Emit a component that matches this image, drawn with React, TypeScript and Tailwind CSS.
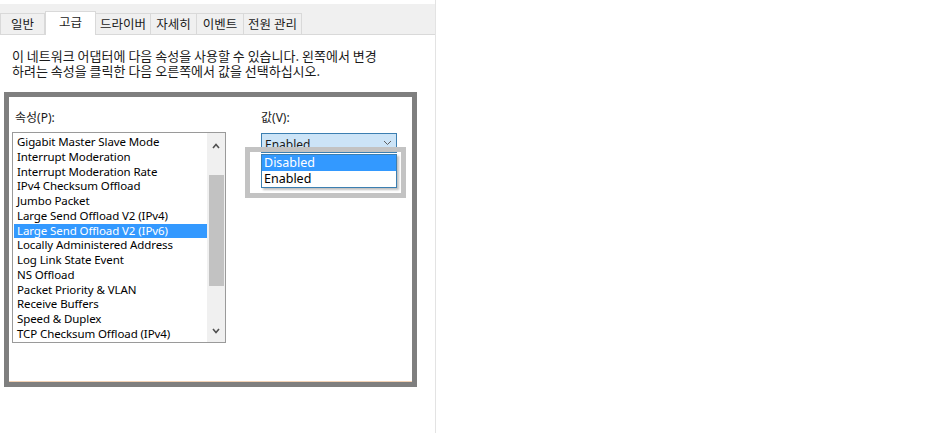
import React from 'react';

const tabs = ['일반', '고급', '드라이버', '자세히', '이벤트', '전원 관리'];
const tabWidths = ['w-[45px]', 'w-[51px]', 'w-[56px]', 'w-[47px]', 'w-[48px]', 'w-[59px]'];

const props = [
  'Gigabit Master Slave Mode',
  'Interrupt Moderation',
  'Interrupt Moderation Rate',
  'IPv4 Checksum Offload',
  'Jumbo Packet',
  'Large Send Offload V2 (IPv4)',
  'Large Send Offload V2 (IPv6)',
  'Locally Administered Address',
  'Log Link State Event',
  'NS Offload',
  'Packet Priority & VLAN',
  'Receive Buffers',
  'Speed & Duplex',
  'TCP Checksum Offload (IPv4)',
];

const font = { fontFamily: '"Noto Sans", "Noto Sans CJK KR", sans-serif' };
const krFont = { fontFamily: '"Noto Sans CJK KR", "Noto Sans", sans-serif' };

function Chevron({ up }: { up?: boolean }) {
  return (
    <svg width="8" height="6" viewBox="0 0 8 6" className="block">
      <path
        d={up ? 'M1 5 L4 1.5 L7 5' : 'M1 1 L4 4.5 L7 1'}
        fill="none"
        stroke="#505050"
        strokeWidth="1.6"
      />
    </svg>
  );
}

export default function App() {
  return (
    <div className="w-[937px] h-[433px] bg-white flex text-[12px] text-[#1a1a1a]" style={font}>
      {/* dialog page */}
      <div className="w-[436px] h-full border-r border-[#e3e3e3] flex flex-col">
        {/* tab strip */}
        <div className="mt-[4px] h-[31px] bg-[#f0f0f0] border-b border-[#d9d9d9] flex items-end text-[12.5px]" style={krFont}>
          {tabs.map((t, i) =>
            i === 1 ? (
              <div
                key={t}
                className={`${tabWidths[i]} h-[24px] -mb-px bg-white border border-b-0 border-[#d9d9d9] flex items-center justify-center leading-none pb-[2px]`}
              >
                {t}
              </div>
            ) : (
              <div
                key={t}
                className={`${tabWidths[i]} h-[21px] bg-[#f0f0f0] border border-b-0 border-[#d9d9d9] -ml-px first:ml-0 flex items-center justify-center leading-none`}
              >
                {t}
              </div>
            )
          )}
        </div>

        {/* description */}
        <div className="pl-[12px] pt-[13px] leading-[15px] text-[13px] whitespace-nowrap" style={krFont}>
          <div className="h-[15px]">이 네트워크 어댑터에 다음 속성을 사용할 수 있습니다. 왼쪽에서 변경</div>
          <div className="h-[15px]">하려는 속성을 클릭한 다음 오른쪽에서 값을 선택하십시오.</div>
        </div>

        {/* annotated frame */}
        <div className="relative ml-[4px] mt-[14px] w-[413px] h-[295px] border-[5px] border-[#7f7f7f] bg-white">
          <div className="flex pl-[3px] pt-[14px]">
            {/* properties */}
            <div className="w-[214px]">
              <div className="h-[21px] pl-[3px] leading-[14px]">속성(P):</div>
              <div className="h-[211px] border border-[#9a9a9a] flex">
                <div className="flex-1 pt-[2px] pl-px text-[11.5px] tracking-[-0.1px]">
                  {props.map((p, i) => (
                    <div
                      key={p}
                      className={`h-[14.75px] leading-[14px] pl-[3px] whitespace-nowrap overflow-hidden ${
                        i === 6 ? 'bg-[#3399ff] text-white' : 'text-black'
                      }`}
                    >
                      {p}
                    </div>
                  ))}
                </div>
                <div className="w-[18px] bg-[#f0f0f0] flex flex-col items-center">
                  <div className="h-[18px] flex items-center justify-center mt-[4px]">
                    <Chevron up />
                  </div>
                  <div className="mt-[20px] w-[15px] h-[111px] bg-[#c2c2c2]" />
                  <div className="flex-1" />
                  <div className="h-[18px] flex items-center justify-center mb-[2px]">
                    <Chevron />
                  </div>
                </div>
              </div>
            </div>

            {/* value */}
            <div className="ml-[35px] w-[136px]">
              <div className="h-[22px] leading-[14px]">값(V):</div>
              <div className="h-[20px] bg-[#cce4f7] border border-[#3c7fb1] flex items-center justify-between pl-[3px] pr-[4px]">
                <span className="leading-none mt-[3px]">Enabled</span>
                <svg width="9" height="6" viewBox="0 0 9 6">
                  <path d="M1 1 L4.5 4.5 L8 1" fill="none" stroke="#606060" strokeWidth="1" />
                </svg>
              </div>
            </div>
          </div>

          {/* open dropdown list */}
          <div className="absolute left-[252px] top-[57px] w-[136px] h-[34px] bg-white border border-[#3c7fb1] shadow-[2px_2px_2px_rgba(0,0,0,0.25)] text-[12.5px]">
            <div className="h-[16px] leading-[16px] pl-[2px] bg-[#3399ff] text-white">Disabled</div>
            <div className="h-[16px] leading-[16px] pl-[2px] text-black">Enabled</div>
          </div>

          {/* highlight around dropdown */}
          <div className="absolute left-[236px] top-[50px] w-[161px] h-[51px] border-[5px] border-[#c3c3c3]" />

          <div className="absolute left-0 right-0 bottom-0 h-px bg-[#f3d2b4]" />
        </div>
      </div>
      <div className="flex-1" />
    </div>
  );
}
